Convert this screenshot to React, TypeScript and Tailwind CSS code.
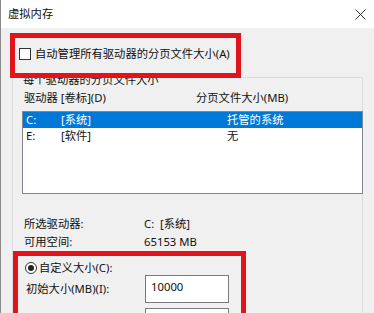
import React from 'react'

const font = "font-['Noto_Sans','Noto_Sans_CJK_SC',sans-serif]"

function CloseIcon() {
  return (
    <svg width="11" height="11" viewBox="0 0 11 11" className="block">
      <path d="M0.5 0.5 L10.5 10.5 M10.5 0.5 L0.5 10.5" stroke="#333" strokeWidth="1" fill="none" />
    </svg>
  )
}

export default function App() {
  return (
    <div className={`relative w-[374px] h-[313px] overflow-hidden bg-[#f0f0f0] border-l border-[#8a8a8a] text-[11.3px] leading-[16px] text-[#111] ${font}`}>
      {/* title bar */}
      <div className="h-[28px] bg-white flex items-center justify-between pl-[7px] pr-[8px]">
        <span>虚拟内存</span>
        <CloseIcon />
      </div>

      <div className="pl-[11px]">
        {/* auto manage */}
        <div className="mt-[18px] h-[16px] flex items-center">
          <div className="ml-[7px] w-[12px] h-[12px] border border-[#333] bg-white" />
          <span className="ml-[4px]">自动管理所有驱动器的分页文件大小(A)</span>
        </div>

        {/* group box */}
        <div className="mt-[15px] w-[351px] h-[260px] border border-[#dcdcdc]">
          <div className="-mt-[6px] ml-[9px] px-[1px] w-fit bg-[#f0f0f0]">每个驱动器的分页文件大小</div>

          <div className="mt-[2px] h-[16px] flex pl-[11px]">
            <span className="w-[172px]">驱动器 [卷标](D)</span>
            <span>分页文件大小(MB)</span>
          </div>

          <div className="mt-[5px] ml-[9px] w-[341px] h-[83px] border border-[#828790] bg-white">
            <div className="h-[16px] flex bg-[#0078d7] text-white pl-[3px]">
              <span className="w-[35px]">C:</span>
              <span className="w-[166px]">[系统]</span>
              <span>托管的系统</span>
            </div>
            <div className="h-[16px] flex pl-[3px]">
              <span className="w-[35px]">E:</span>
              <span className="w-[166px]">[软件]</span>
              <span>无</span>
            </div>
          </div>

          <div className="mt-[22px] flex pl-[11px]">
            <span className="w-[120px]">所选驱动器:</span>
            <span>C:&nbsp;&nbsp;[系统]</span>
          </div>
          <div className="mt-[2px] flex pl-[11px]">
            <span className="w-[120px]">可用空间:</span>
            <span>65153 MB</span>
          </div>

          <div className="mt-[10px] h-[16px] flex items-center pl-[12px]">
            <div className="w-[12px] h-[12px] rounded-full border border-[#333] bg-white flex items-center justify-center">
              <div className="w-[6px] h-[6px] rounded-full bg-[#222]" />
            </div>
            <span className="ml-[2px]">自定义大小(C):</span>
          </div>

          <div className="-mt-[1px] h-[28px] flex items-center pl-[13px]">
            <span className="w-[119px]">初始大小(MB)(I):</span>
            <div className="w-[84px] h-[28px] border border-[#7a7a7a] bg-white pl-[5px] pt-[3px]">10000</div>
          </div>
          <div className="mt-[5px] flex pl-[132px]">
            <div className="w-[84px] h-[28px] border border-[#7a7a7a] bg-white" />
          </div>
        </div>
      </div>

      {/* red annotation frames */}
      <div className="absolute left-[9px] top-[33px] w-[231px] h-[45px] border-[5px] border-[#e1141c]" />
      <div className="absolute left-[12px] top-[251px] w-[233px] h-[80px] border-[5px] border-[#e1141c]" />
    </div>
  )
}
